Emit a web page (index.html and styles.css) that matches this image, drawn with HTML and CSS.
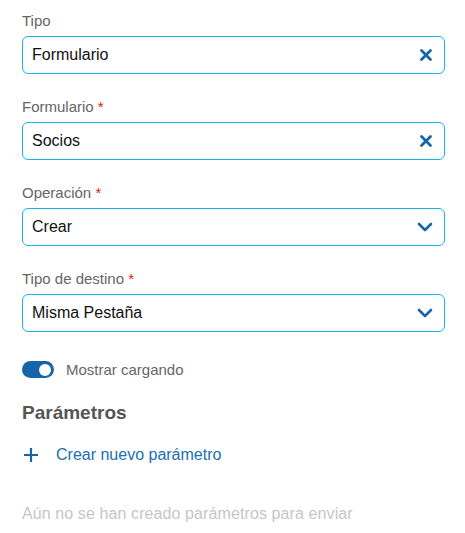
FILE: index.html
```html
<!DOCTYPE html>
<html lang="es">
<head>
<meta charset="utf-8">
<link rel="stylesheet" href="styles.css">
</head>
<body>
<div class="form">
  <div class="field">
    <label class="label">Tipo</label>
    <div class="box"><span class="value">Formulario</span>
      <svg class="icon" width="14" height="14" viewBox="0 0 14 14"><path d="M2.5 2.5 L11.5 11.5 M11.5 2.5 L2.5 11.5" stroke="#1565a8" stroke-width="2.8" stroke-linecap="round"/></svg>
    </div>
  </div>
  <div class="field">
    <label class="label">Formulario <span class="req">*</span></label>
    <div class="box"><span class="value">Socios</span>
      <svg class="icon" width="14" height="14" viewBox="0 0 14 14"><path d="M2.5 2.5 L11.5 11.5 M11.5 2.5 L2.5 11.5" stroke="#1565a8" stroke-width="2.8" stroke-linecap="round"/></svg>
    </div>
  </div>
  <div class="field">
    <label class="label">Operación <span class="req">*</span></label>
    <div class="box"><span class="value">Crear</span>
      <svg class="icon" width="16" height="12" viewBox="0 0 16 12"><path d="M2 3 L8 9 L14 3" fill="none" stroke="#1565a8" stroke-width="2.6" stroke-linecap="round" stroke-linejoin="round"/></svg>
    </div>
  </div>
  <div class="field">
    <label class="label">Tipo de destino <span class="req">*</span></label>
    <div class="box"><span class="value">Misma Pestaña</span>
      <svg class="icon" width="16" height="12" viewBox="0 0 16 12"><path d="M2 3 L8 9 L14 3" fill="none" stroke="#1565a8" stroke-width="2.6" stroke-linecap="round" stroke-linejoin="round"/></svg>
    </div>
  </div>
  <div class="toggle-row">
    <span class="toggle"><span class="knob"></span></span>
    <span class="toggle-label">Mostrar cargando</span>
  </div>
  <h2 class="title">Parámetros</h2>
  <div class="add">
    <svg width="16" height="16" viewBox="0 0 16 16"><path d="M8 1 V15 M1 8 H15" stroke="#1565a8" stroke-width="2.2"/></svg>
    <span class="add-label">Crear nuevo parámetro</span>
  </div>
  <p class="empty">Aún no se han creado parámetros para enviar</p>
</div>
</body>
</html>
```
FILE: styles.css
```css
html, body { margin: 0; padding: 0; background: #fff; }
body { font-family: "Liberation Sans", Arial, sans-serif; }
.form { padding: 12px 20px 0 22px; display: flex; flex-direction: column; }
.field { display: flex; flex-direction: column; margin-bottom: 24px; }
.label { font-size: 15px; color: #666; line-height: 18px; margin-bottom: 6px; }
.req { color: #e02020; }
.box {
  height: 36px; border: 1px solid #19b4ec; border-radius: 6px;
  display: flex; align-items: center; justify-content: space-between;
  padding: 0 11px 0 9px;
}
.value { font-size: 16px; color: #111; }
.icon { display: block; }
.toggle-row { display: flex; align-items: center; gap: 12px; margin-top: 5px; }
.toggle { width: 32px; height: 17px; border-radius: 9px; background: #1565a8; position: relative; display: inline-block; }
.knob { position: absolute; right: 3px; top: 2.5px; width: 12px; height: 12px; border-radius: 50%; background: #fff; }
.toggle-label { font-size: 15px; color: #666; }
.title { font-size: 19px; font-weight: bold; color: #555; margin: 24px 0 0; line-height: 22px; }
.add { display: flex; align-items: center; gap: 17px; margin-top: 22px; padding-left: 1px; }
.add-label { font-size: 16px; color: #1a6fb5; }
.empty { font-size: 16px; letter-spacing: 0.1px; color: #c6c6c6; margin: 41px 0 0; }
```
